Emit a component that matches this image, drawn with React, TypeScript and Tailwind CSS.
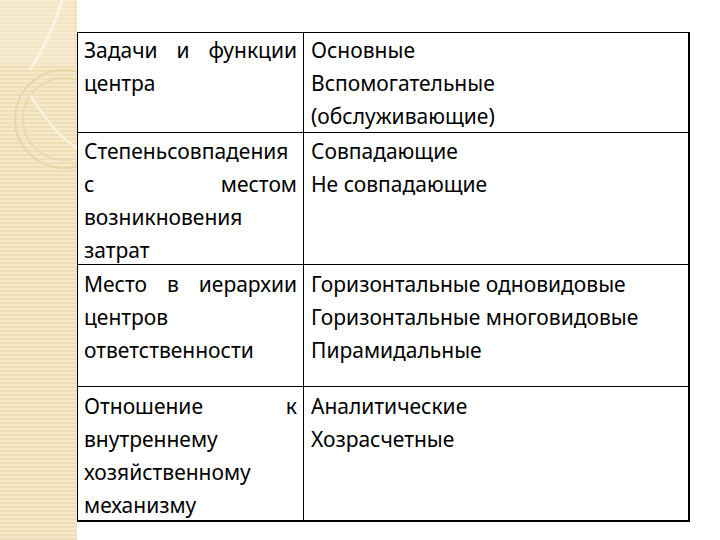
import React from "react";

type Row = {
  h: string;
  pt: string;
  left: string[];
  right: string[];
};

const rows: Row[] = [
  {
    h: "h-[99px]",
    pt: "pt-[1px]",
    left: ["Задачи и функции", "центра"],
    right: ["Основные", "Вспомогательные", "(обслуживающие)"],
  },
  {
    h: "h-[132px]",
    pt: "pt-[2px]",
    left: ["Степеньсовпадения", "с местом", "возникновения", "затрат"],
    right: ["Совпадающие", "Не совпадающие"],
  },
  {
    h: "h-[122px]",
    pt: "pt-[3px]",
    left: ["Место в иерархии", "центров", "ответственности"],
    right: [
      "Горизонтальные одновидовые",
      "Горизонтальные многовидовые",
      "Пирамидальные",
    ],
  },
  {
    h: "h-[134px]",
    pt: "pt-[3px]",
    left: ["Отношение к", "внутреннему", "хозяйственному", "механизму"],
    right: ["Аналитические", "Хозрасчетные"],
  },
];

function Strip() {
  return (
    <div className="relative w-[77px] shrink-0 h-full overflow-hidden bg-[#f2e4bf] bg-[repeating-linear-gradient(180deg,#f5e9c9_0px,#f5e9c9_2px,#eedfb6_2px,#eedfb6_4px)]">
      <svg width="77" height="540" className="absolute left-0 top-0">
        <rect x="0" y="0" width="74" height="64" fill="#f7eed6" opacity="0.5" />
        <path d="M62 0 Q50 40 30 70" stroke="#fbf5e6" strokeWidth="3" fill="none" />
        <circle cx="64" cy="119" r="49" stroke="#e6d5a6" strokeWidth="2" fill="none" />
        <circle cx="64" cy="119" r="41" stroke="#e9d9ad" strokeWidth="2" fill="none" />
        <path d="M30 95 Q55 135 77 148" stroke="#fbf5e6" strokeWidth="2" fill="none" />
      </svg>
    </div>
  );
}

export default function App() {
  return (
    <div className="flex w-[720px] h-[540px] bg-white text-black font-['Noto_Sans',sans-serif] text-[21px] leading-[33px]">
      <Strip />
      <div className="pt-[32px]">
        <div className="w-[613px] border border-black border-r-2 border-b-2">
          {rows.map((r, i) => (
            <div key={i} className={`flex ${r.h} ${i > 0 ? "border-t border-black" : ""}`}>
              <div className={`w-[226px] shrink-0 border-r border-black pl-[6px] pr-[6px] whitespace-nowrap ${r.pt}`}>
                {r.left.map((l, j) => (
                  <div
                    key={j}
                    className={j < r.left.length - 1 ? "text-justify [text-align-last:justify]" : ""}
                  >
                    {l}
                  </div>
                ))}
              </div>
              <div className={`flex-1 pl-[7px] whitespace-nowrap ${r.pt}`}>
                {r.right.map((l, j) => (
                  <div key={j}>{l}</div>
                ))}
              </div>
            </div>
          ))}
        </div>
      </div>
    </div>
  );
}
